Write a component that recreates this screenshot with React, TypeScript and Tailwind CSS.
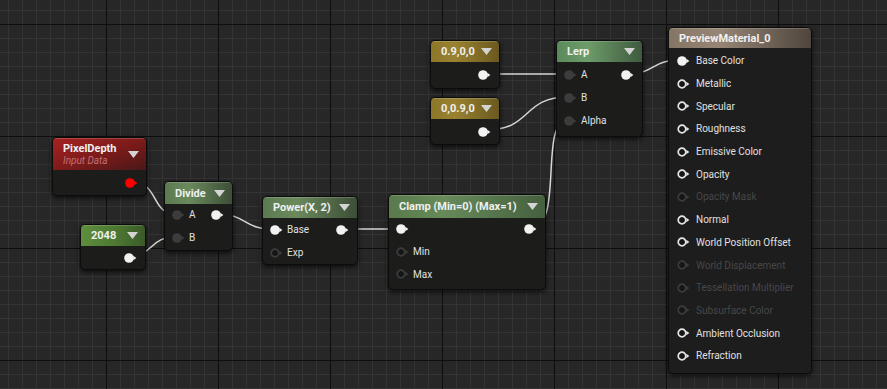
import React from 'react'

type PinKind = 'on' | 'off' | 'ring' | 'dim' | 'red'

function Pin({ kind }: { kind: PinKind }) {
    const color = kind === 'on' ? '#f2f2f2' : kind === 'red' ? '#ff0000' : kind === 'ring' ? '#e6e6e6' : '#3c3c3c'
    const filled = kind === 'on' || kind === 'red' || kind === 'off'
    return (
        <svg width="13" height="10" viewBox="0 0 13 10" className="shrink-0">
            {filled ? (
                <circle cx="5" cy="5" r="4.8" fill={color} />
            ) : (
                <circle cx="5" cy="5" r="3.8" fill="#161616" stroke={color} strokeWidth="1.7" />
            )}
            <polygon points="9.3,2.8 12.4,5 9.3,7.2" fill={color} />
        </svg>
    )
}

function Arrow() {
    return (
        <svg width="11" height="7" viewBox="0 0 11 7" className="shrink-0">
            <polygon points="0,0 11,0 5.5,7" fill="#d4d4d4" />
        </svg>
    )
}

type Row = { inPin?: PinKind; label?: string; outPin?: PinKind; dim?: boolean }

function Node({ pos, head, title, subtitle, rows, arrow = true, body = '' }: {
    pos: string
    head: string
    title: string
    subtitle?: string
    rows: Row[]
    arrow?: boolean
    body?: string
}) {
    return (
        <div className={`absolute ${pos} rounded-[5px] border border-[#0c0c0c] bg-[#1c1d1b] shadow-[0_2px_5px_rgba(0,0,0,0.7)] overflow-hidden`}>
            <div className={`flex items-center justify-between pl-[10px] pr-[7px] shadow-[inset_0_1px_0_rgba(255,255,255,0.18)] ${head}`}>
                <div className="flex flex-col leading-none">
                    <span className="text-[11px] font-bold text-[#f0f0f0]">{title}</span>
                    {subtitle && <span className="mt-[2px] text-[10px] italic text-[#c07272]">{subtitle}</span>}
                </div>
                {arrow && <Arrow />}
            </div>
            <div className={`flex flex-col ${body}`}>
                {rows.map((r, i) => (
                    <div key={i} className="flex h-[23px] items-center justify-between pl-[7px] pr-[8px]">
                        <div className="flex items-center gap-[4px]">
                            {r.inPin && <Pin kind={r.inPin} />}
                            {r.label && <span className={`text-[10px] ${r.dim ? 'text-[#474747]' : 'text-[#e0e0e0]'}`}>{r.label}</span>}
                        </div>
                        {r.outPin && <Pin kind={r.outPin} />}
                    </div>
                ))}
            </div>
        </div>
    )
}

const previewRows: Row[] = [
    { inPin: 'on', label: 'Base Color' },
    { inPin: 'ring', label: 'Metallic' },
    { inPin: 'ring', label: 'Specular' },
    { inPin: 'ring', label: 'Roughness' },
    { inPin: 'ring', label: 'Emissive Color' },
    { inPin: 'ring', label: 'Opacity' },
    { inPin: 'dim', label: 'Opacity Mask', dim: true },
    { inPin: 'ring', label: 'Normal' },
    { inPin: 'ring', label: 'World Position Offset' },
    { inPin: 'dim', label: 'World Displacement', dim: true },
    { inPin: 'dim', label: 'Tessellation Multiplier', dim: true },
    { inPin: 'dim', label: 'Subsurface Color', dim: true },
    { inPin: 'ring', label: 'Ambient Occlusion' },
    { inPin: 'ring', label: 'Refraction' },
]

export default function App() {
    return (
        <div className="relative h-[389px] w-[887px] overflow-hidden bg-[#272727] font-['Roboto',sans-serif] [background-image:linear-gradient(to_right,#0e0e0e_1px,transparent_1px),linear-gradient(to_bottom,#0e0e0e_1px,transparent_1px),linear-gradient(to_right,#343434_1px,transparent_1px),linear-gradient(to_bottom,#343434_1px,transparent_1px)] [background-size:112px_112px,112px_112px,14px_14px,14px_14px] [background-position:106px_24px,106px_24px,8px_10px,8px_10px]">
            {/* wires */}
            <svg className="absolute inset-0" width="887" height="389" fill="none" stroke="#d6d6d6" strokeWidth="1.5">
                <path d="M131,182 C160,182 150,214 176,214" />
                <path d="M126,256 C156,256 148,237 176,237" />
                <path d="M216,214 C248,214 242,229 273,229" />
                <path d="M344,229 L400,229" />
                <path d="M530,229 C565,229 538,120 568,120" />
                <path d="M486,74 L568,74" />
                <path d="M486,130 C532,130 522,97 568,97" />
                <path d="M626,74 C656,74 650,60 681,60" />
            </svg>

            <Node
                pos="left-[52px] top-[137px] w-[95px]"
                head="h-[32px] bg-[linear-gradient(160deg,#a82222,#7a1a1a_55%,#4a1818)]"
                title="PixelDepth"
                subtitle="Input Data"
                rows={[{ outPin: 'red' }]}
                body="h-[25px] pt-[1px]"
            />
            <Node
                pos="left-[80px] top-[224px] w-[66px]"
                head="h-[21px] bg-[linear-gradient(to_right,#5f8f3d,#4a7530_60%,#3b5a2a)]"
                title="2048"
                rows={[{ outPin: 'on' }]}
                body="h-[23px]"
            />
            <Node
                pos="left-[164px] top-[181px] w-[69px]"
                head="h-[22px] bg-[linear-gradient(to_right,#5c7a50,#6a8a5d_35%,#3d4e37)]"
                title="Divide"
                rows={[{ inPin: 'off', label: 'A', outPin: 'on' }, { inPin: 'off', label: 'B' }]}
                body="h-[47px] -mt-[1px]"
            />
            <Node
                pos="left-[262px] top-[196px] w-[96px]"
                head="h-[21px] bg-[linear-gradient(to_right,#5c7a50,#6a8a5d_35%,#3d4e37)]"
                title="Power(X, 2)"
                rows={[{ inPin: 'on', label: 'Base', outPin: 'on' }, { inPin: 'dim', label: 'Exp' }]}
                body="h-[46px]"
            />
            <Node
                pos="left-[388px] top-[194px] w-[158px]"
                head="h-[23px] bg-[linear-gradient(to_right,#587a4c,#678a5a_35%,#44603e)]"
                title="Clamp (Min=0) (Max=1)"
                rows={[{ inPin: 'on', outPin: 'on' }, { inPin: 'dim', label: 'Min' }, { inPin: 'dim', label: 'Max' }]}
                body="h-[71px] [&>div]:h-[22.5px]"
            />
            <Node
                pos="left-[430px] top-[40px] w-[70px]"
                head="h-[21px] bg-[linear-gradient(to_right,#8c7628,#9a8230_35%,#6a5920)]"
                title="0.9,0,0"
                rows={[{ outPin: 'on' }]}
                body="h-[26px] pt-[1px]"
            />
            <Node
                pos="left-[430px] top-[97px] w-[70px]"
                head="h-[21px] bg-[linear-gradient(to_right,#8c7628,#9a8230_35%,#6a5920)]"
                title="0,0.9,0"
                rows={[{ outPin: 'on' }]}
                body="h-[25px] pt-[1px]"
            />
            <Node
                pos="left-[556px] top-[40px] w-[87px]"
                head="h-[21px] bg-[linear-gradient(to_right,#5a8a5a,#6d9c6a_35%,#3f5a3e)]"
                title="Lerp"
                rows={[{ inPin: 'off', label: 'A', outPin: 'on' }, { inPin: 'off', label: 'B' }, { inPin: 'off', label: 'Alpha' }]}
                body="h-[74px] pt-[1px]"
            />
            <Node
                pos="left-[668px] top-[27px] w-[144px]"
                head="h-[20px] bg-[linear-gradient(to_right,#857565,#978675_35%,#4e453d)]"
                title="PreviewMaterial_0"
                arrow={false}
                rows={previewRows}
                body="h-[325px] pt-[1.5px] [&>div]:h-[22.7px] [&>div]:pl-[8px] [&>div>div]:gap-[6px] bg-[#1d1d1d]"
            />
        </div>
    )
}
